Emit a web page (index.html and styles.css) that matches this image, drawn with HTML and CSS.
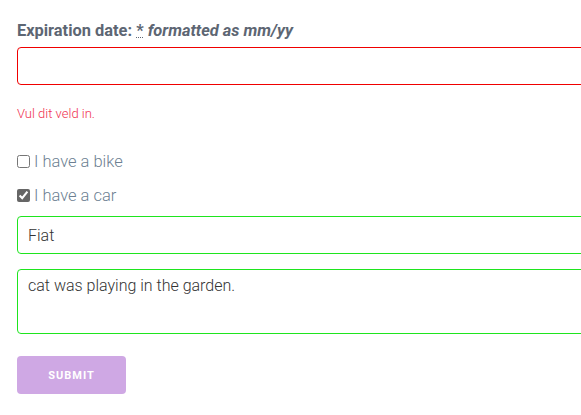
FILE: index.html
```html
<!DOCTYPE html>
<html>
<head>
<meta charset="utf-8">
<link rel="stylesheet" href="styles.css">
</head>
<body>
<form class="form">
  <label class="label">Expiration date: <abbr class="req" title="required">*</abbr> <em>formatted as mm/yy</em></label>
  <input class="field field-invalid" type="text">
  <div class="error">Vul dit veld in.</div>
  <div class="check-row check-first"><input type="checkbox" class="check"><span class="check-label">I have a bike</span></div>
  <div class="check-row"><input type="checkbox" class="check" checked><span class="check-label">I have a car</span></div>
  <input class="field field-valid" type="text" value="Fiat">
  <textarea class="field field-valid area">cat was playing in the garden.</textarea>
  <button type="button" class="submit">SUBMIT</button>
</form>
</body>
</html>
```

FILE: styles.css
```css
html, body {
  margin: 0;
  padding: 0;
  background: #fff;
  overflow: hidden;
}
body {
  font-family: Roboto, "Liberation Sans", sans-serif;
}
.form {
  padding: 20px 0 0 17px;
  display: flex;
  flex-direction: column;
  align-items: flex-start;
}
.label {
  font-size: 16.4px;
  font-weight: 700;
  color: #5d6673;
  line-height: 22px;
}
.req {
  text-decoration: underline dotted;
  text-decoration-thickness: 1px;
}
.field {
  box-sizing: border-box;
  width: 640px;
  height: 38px;
  margin: 5px 0 0 0;
  padding: 0 10px;
  border-radius: 4px;
  font-family: Roboto, "Liberation Sans", sans-serif;
  font-size: 16px;
  font-weight: 300;
  color: #333;
  background: #fff;
  outline: none;
}
.field-invalid {
  border: 1px solid #f00000;
}
.field-valid {
  border: 1px solid #1ee51e;
}
.error {
  margin-top: 21px;
  font-size: 13px;
  font-weight: 300;
  color: #f0304f;
  line-height: 16px;
}
.check-row {
  display: flex;
  align-items: center;
  height: 20px;
  margin-top: 14px;
}
.check-first {
  margin-top: 29px;
}
.check {
  width: 13px;
  height: 13px;
  margin: 0 4px 0 0;
  accent-color: #666;
}
.check-label {
  font-size: 16.5px;
  font-weight: 300;
  color: #6d7f92;
}
.field-valid {
  margin-top: 11px;
}
.area {
  height: 65px;
  margin-top: 15px;
  padding: 6px 10px;
  resize: none;
  line-height: 20px;
}
.submit {
  margin-top: 22px;
  width: 109px;
  height: 38px;
  border: none;
  border-radius: 4px;
  background: #cfa8e4;
  color: #fff;
  font-family: Roboto, "Liberation Sans", sans-serif;
  font-size: 11px;
  font-weight: 700;
  letter-spacing: 1px;
  cursor: pointer;
}
```
